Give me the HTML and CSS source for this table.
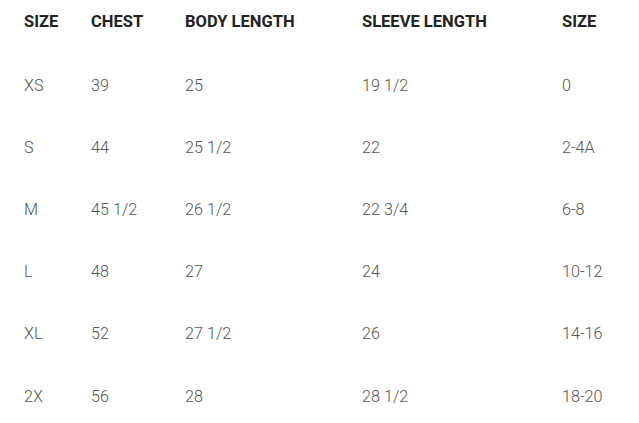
FILE: index.html
```html
<!DOCTYPE html>
<html>
<head>
<meta charset="utf-8">
<link rel="stylesheet" href="styles.css">
</head>
<body>
<div class="chart">
  <div class="row head">
    <div>SIZE</div><div>CHEST</div><div>BODY LENGTH</div><div>SLEEVE LENGTH</div><div>SIZE</div>
  </div>
  <div class="rows">
    <div class="row"><div>XS</div><div>39</div><div>25</div><div>19 1/2</div><div>0</div></div>
    <div class="row"><div>S</div><div>44</div><div>25 1/2</div><div>22</div><div>2-4A</div></div>
    <div class="row"><div>M</div><div>45 1/2</div><div>26 1/2</div><div>22 3/4</div><div>6-8</div></div>
    <div class="row"><div>L</div><div>48</div><div>27</div><div>24</div><div>10-12</div></div>
    <div class="row"><div>XL</div><div>52</div><div>27 1/2</div><div>26</div><div>14-16</div></div>
    <div class="row"><div>2X</div><div>56</div><div>28</div><div>28 1/2</div><div>18-20</div></div>
  </div>
</div>
</body>
</html>
```

FILE: styles.css
```css
html, body {
  margin: 0;
  padding: 0;
  background: #fff;
}
body {
  font-family: Roboto, "Liberation Sans", sans-serif;
}
.chart {
  padding-left: 24px;
}
.row {
  display: grid;
  grid-template-columns: 67px 94px 177px 200px 1fr;
  align-items: center;
  height: 62.2px;
  font-size: 16.2px;
  font-weight: 300;
  color: #555;
}
.row.head {
  height: 42px;
  font-size: 16.5px;
  font-weight: 700;
  color: #222;
}
.rows {
  margin-top: 12px;
}
```
